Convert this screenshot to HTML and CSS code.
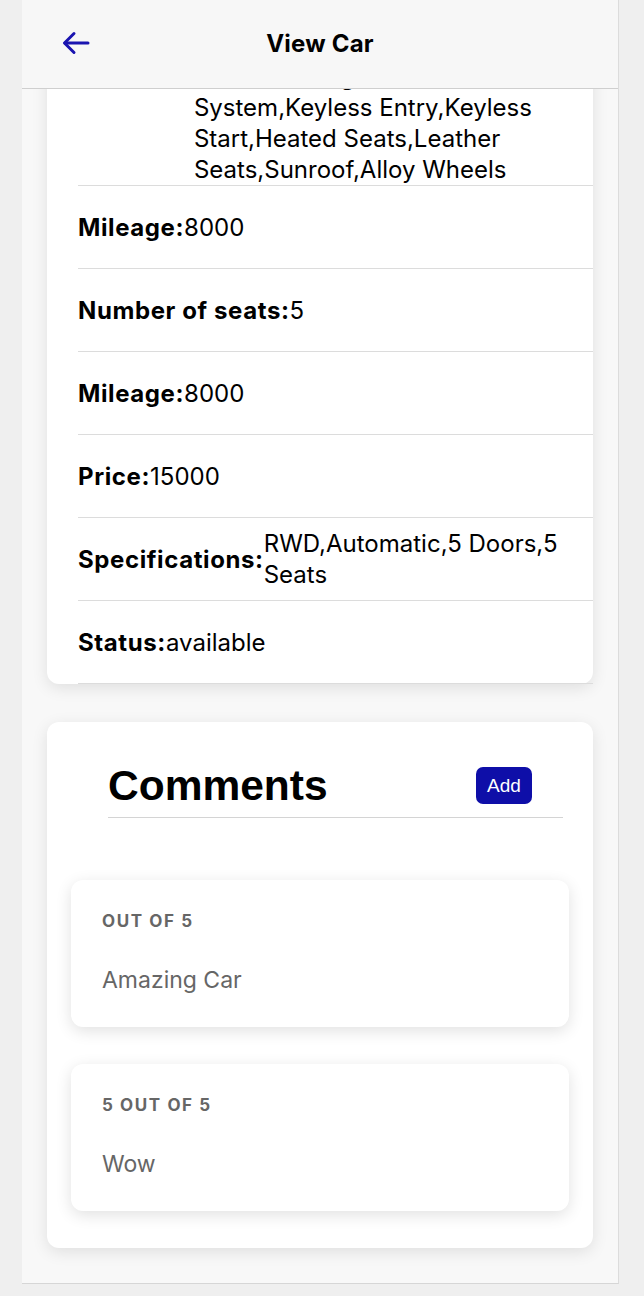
FILE: index.html
```html
<!DOCTYPE html>
<html lang="en">
<head>
<meta charset="utf-8">
<title>View Car</title>
<link rel="stylesheet" href="styles.css">
</head>
<body>
<div class="frame">
  <header class="toolbar">
    <button class="back" aria-label="Back">
      <svg width="28" height="24" viewBox="0 0 28 24" fill="none" stroke="currentColor" stroke-width="3" stroke-linecap="round" stroke-linejoin="round">
        <path d="M26 12H3"/>
        <path d="M12 2.5L2.5 12L12 21.5"/>
      </svg>
    </button>
    <h1 class="title">View Car</h1>
    <span class="spacer"></span>
  </header>

  <div class="scroll-top">
    <section class="card details">
      <div class="row"><span class="label">Make:</span><span class="value">BMW</span></div>
      <div class="row"><span class="label">Model:</span><span class="value">3 Series</span></div>
      <div class="row"><span class="label">Features:</span><span class="value">Air Conditioning,Power Steering,Power Windows,Power Locks,Cruise Control,Bluetooth,Backup Camera,Navigation System,Keyless Entry,Keyless Start,Heated Seats,Leather Seats,Sunroof,Alloy Wheels</span></div>
      <div class="row"><span class="label">Mileage:</span><span class="value">8000</span></div>
      <div class="row"><span class="label">Number of seats:</span><span class="value">5</span></div>
      <div class="row"><span class="label">Mileage:</span><span class="value">8000</span></div>
      <div class="row"><span class="label">Price:</span><span class="value">15000</span></div>
      <div class="row"><span class="label">Specifications:</span><span class="value">RWD,Automatic,5 Doors,5 Seats</span></div>
      <div class="row"><span class="label">Status:</span><span class="value">available</span></div>
    </section>
  </div>

  <section class="card comments">
    <div class="comments-head">
      <h2>Comments</h2>
      <button class="add">Add</button>
    </div>
    <div class="comment">
      <div class="rating">OUT OF 5</div>
      <div class="text">Amazing Car</div>
    </div>
    <div class="comment">
      <div class="rating">5 OUT OF 5</div>
      <div class="text">Wow</div>
    </div>
  </section>
</div>
</body>
</html>
```

FILE: styles.css
```css
* { box-sizing: border-box; }

html, body {
  margin: 0;
  padding: 0;
}

body {
  background: #efefef;
  font-family: "Inter", "Liberation Sans", sans-serif;
  color: #000;
  width: 644px;
  height: 1296px;
  overflow: hidden;
}

.frame {
  width: 597px;
  height: 1284px;
  margin-left: 22px;
  background: #f8f8f8;
  border-right: 1px solid #dcdcdc;
  border-bottom: 1px solid #d6d6d6;
  overflow: hidden;
}

.toolbar {
  height: 89px;
  background: #f7f7f7;
  border-bottom: 1px solid #cfcfcf;
  display: grid;
  grid-template-columns: 1fr auto 1fr;
  align-items: center;
}

.back {
  justify-self: start;
  background: none;
  border: 0;
  padding: 0;
  margin-left: 40px;
  margin-top: -3px;
  color: #1a14b0;
  display: flex;
  width: 28px;
  height: 24px;
}

.title {
  margin: 0;
  font-size: 24px;
  font-weight: 700;
  line-height: 30px;
  letter-spacing: 0.2px;
}

.scroll-top {
  height: 633px;
  padding-bottom: 38px;
  display: flex;
  flex-direction: column;
  justify-content: flex-end;
  overflow: hidden;
}

.card {
  background: #fff;
  border-radius: 12px;
  margin: 0 25px;
  box-shadow: 0 4px 16px rgba(0, 0, 0, 0.10);
  flex-shrink: 0;
}

.details {
  padding-left: 31px;
  border-radius: 0 0 12px 12px;
}

.row {
  display: flex;
  align-items: center;
  min-height: 83px;
  padding-right: 16px;
  border-bottom: 1px solid #dcdcdc;
  font-size: 24px;
  line-height: 31px;
}

.label {
  font-weight: 700;
  letter-spacing: 0.6px;
  flex-shrink: 0;
}

.value {
  font-weight: 400;
}

.comments {
  padding: 40px 24px 37px;
}

.comments-head {
  display: flex;
  align-items: center;
  justify-content: space-between;
  margin: 0 6px 62px 37px;
  padding: 0 31px 8px 0;
  border-bottom: 1px solid #d4d4d4;
  height: 56px;
}

.comments-head h2 {
  margin: 0;
  font-family: "Liberation Sans", Arial, sans-serif;
  font-weight: 700;
  font-size: 42.5px;
  line-height: 48px;
}

.add {
  background: #0e0ea8;
  color: #fff;
  border: 0;
  border-radius: 7px;
  font-family: "Liberation Sans", Arial, sans-serif;
  font-size: 19px;
  width: 56px;
  height: 37px;
  padding: 0;
}

.comment {
  background: #fff;
  border-radius: 12px;
  box-shadow: 0 4px 16px rgba(0, 0, 0, 0.12);
  height: 147px;
  padding: 31px 31px 0;
  margin-bottom: 37px;
}

.comment:last-child {
  margin-bottom: 0;
}

.rating {
  font-size: 17px;
  line-height: 21px;
  font-weight: 700;
  letter-spacing: 1.6px;
  color: #666;
}

.text {
  margin-top: 34px;
  font-size: 23px;
  line-height: 28px;
  color: #666;
}
```
